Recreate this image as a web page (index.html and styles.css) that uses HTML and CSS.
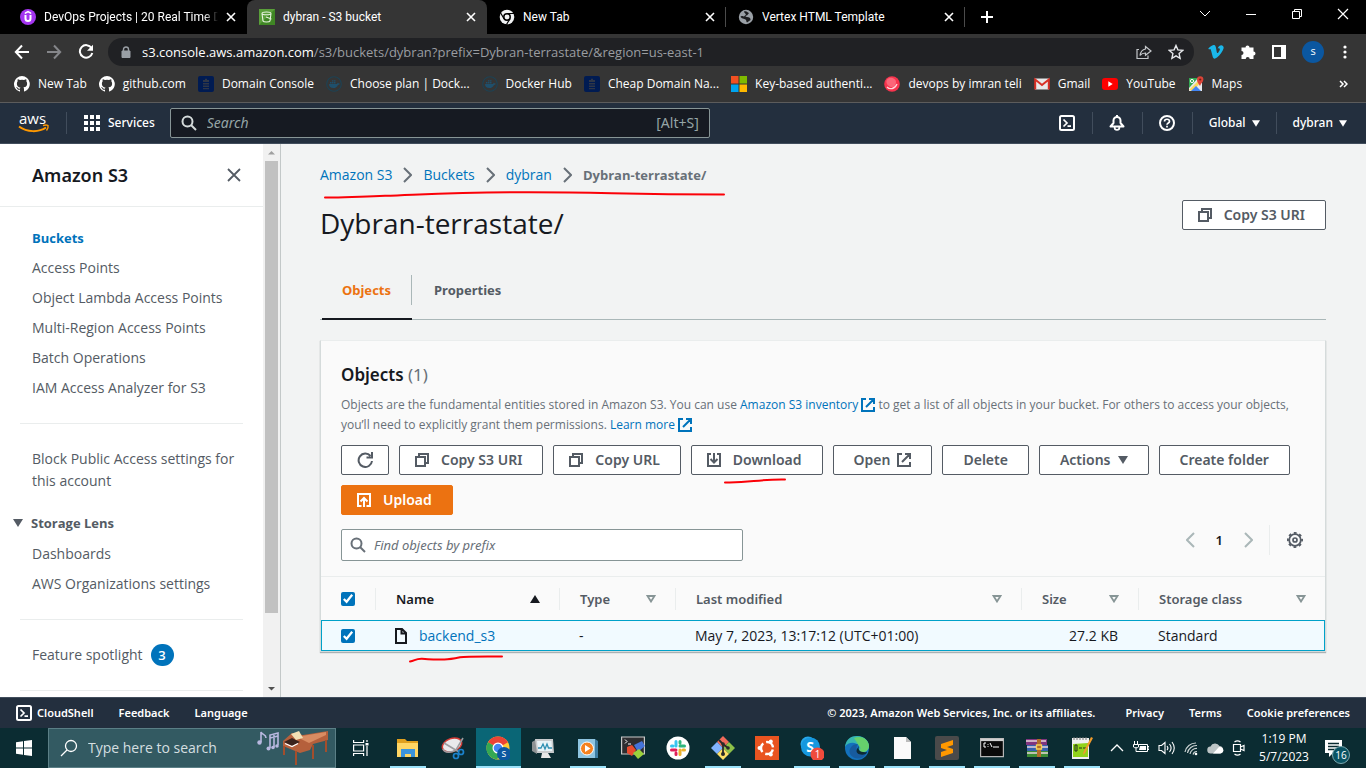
FILE: index.html
```html
<!DOCTYPE html>
<html lang="en">
<head>
<meta charset="utf-8">
<title>dybran - S3 bucket</title>
<link rel="stylesheet" href="styles.css">
</head>
<body>
<svg class="defs" aria-hidden="true">
  <symbol id="x" viewBox="0 0 10 10"><path d="M1 1l8 8M9 1l-8 8" fill="none" stroke="currentColor" stroke-width="1.6"/></symbol>
  <symbol id="github" viewBox="0 0 16 16"><path fill="#fff" d="M8 0a8 8 0 0 0-2.5 15.6c.4.1.5-.2.5-.4v-1.500c-2.200.5-2.700-1-2.700-1-.4-.9-.9-1.200-.9-1.200-.7-.5.1-.5.1-.5.8.1 1.200.8 1.200.8.7 1.300 1.900.9 2.300.7.1-.5.3-.9.500-1.100-1.800-.2-3.600-.9-3.600-4 0-.9.3-1.600.8-2.100 0-.2-.4-1 .1-2.100 0 0 .7-.2 2.200.8a7.500 7.500 0 0 1 4 0c1.500-1 2.200-.8 2.200-.8.4 1.100.2 1.900.1 2.100.5.6.8 1.300.8 2.100 0 3.100-1.900 3.700-3.700 4 .3.300.6.800.6 1.500v2.200c0 .2.100.5.600.4A8 8 0 0 0 8 0z"/></symbol>
  <symbol id="domain" viewBox="0 0 16 16"><rect width="16" height="16" rx="2" fill="#001b52"/><path d="M5 4h6v2H5zM5 7h6v1.500H5zM5 9.500h6V11H5zM5 12h6v1.200H5zM7 2.700h2V4H7z" fill="#2f3747"/></symbol>
  <symbol id="docker" viewBox="0 0 16 16"><circle cx="8" cy="8" r="7.300" fill="none" stroke="#1d4254" stroke-width="1.100"/><path d="M3 8h8c.3-1 .8-1.500 1-1.600.5.500.6 1 .6 1.200.6-.1 1 .1 1.200.2-.4.900-1 1.100-1.800 1.100C11.300 11 9.500 12 7.300 12 4.500 12 3 10.500 3 8zM4 6h1.500v1.500H4zM6 6h1.500v1.500H6zM8 6h1.500v1.500H8zM6 4.200h1.500v1.400H6zM8 4.200h1.500v1.400H8z" fill="#1f4f6b"/></symbol>
  <symbol id="shell" viewBox="0 0 16 16"><rect x="1" y="1" width="14" height="14" rx="1.500" fill="none" stroke="currentColor" stroke-width="2"/><path d="M4.500 4.500L8 8l-3.500 3.500M8.500 11.200H12" fill="none" stroke="currentColor" stroke-width="1.700"/></symbol>
  <symbol id="search" viewBox="0 0 16 16"><circle cx="6.500" cy="6.500" r="5" fill="none" stroke="currentColor" stroke-width="2"/><path d="M10 10l5 5" stroke="currentColor" stroke-width="2"/></symbol>
  <symbol id="down" viewBox="0 0 10 8"><path d="M0 0h10L5 8z" fill="currentColor"/></symbol>
  <symbol id="sort" viewBox="0 0 10 8"><path d="M1.500 1h7L5 6.500z" fill="none" stroke="#879596" stroke-width="1.800"/></symbol>
  <symbol id="chev" viewBox="0 0 9 16"><path d="M1 1l7 7-7 7" fill="none" stroke="currentColor" stroke-width="2"/></symbol>
  <symbol id="copy" viewBox="0 0 14 14"><path d="M1 4h9v9H1z" fill="none" stroke="currentColor" stroke-width="2"/><path d="M4 4V1h9v9h-3" fill="none" stroke="currentColor" stroke-width="2"/></symbol>
  <symbol id="ext" viewBox="0 0 14 14"><path d="M5 1H1v12h12V9M8 1h5v5M13 1L5 9" fill="none" stroke="currentColor" stroke-width="2"/></symbol>
  <symbol id="octo" viewBox="0 0 16 16"><circle cx="8" cy="8" r="5.800" fill="none" stroke="currentColor" stroke-width="1.800"/><circle cx="8" cy="8" r="7.100" fill="none" stroke="currentColor" stroke-width="1.800" stroke-dasharray="2.800 2.776" stroke-dashoffset="1.400"/><circle cx="8" cy="8" r="2" fill="none" stroke="currentColor" stroke-width="1.700"/></symbol>
</svg>

<header class="browser">
  <div class="tabs">
    <div class="tab">
      <svg width="16" height="16" viewBox="0 0 16 16"><circle cx="8" cy="8" r="8" fill="#a435f0"/><path d="M8 1.800l3.200 1.800v1.600L8 3.500 4.800 5.200V3.600z" fill="#fff"/><path d="M5.500 6v3.500c0 3.400 5 3.400 5 0V6" fill="none" stroke="#fff" stroke-width="2"/></svg>
      <span class="tab-title fade">DevOps Projects | 20 Real Time D</span>
      <button aria-label="Close tab"><svg width="10" height="10"><use href="#x"/></svg></button>
    </div>
    <div class="tab active">
      <svg width="16" height="16" viewBox="0 0 16 16"><path d="M0 0h16v16H0z" fill="#3f8624"/><path d="M0 0h16L0 16z" fill="#5a9f3a"/><path d="M3 4.500c0-2 9-2 9 0l-1 7.500c-.5 1.400-6.500 1.400-7 0zM3 4.500c0 1.700 9 1.700 9 0M7 8l5.500 2" fill="none" stroke="#e7f3df" stroke-width="1.100"/></svg>
      <span class="tab-title">dybran - S3 bucket</span>
      <button aria-label="Close tab"><svg width="10" height="10"><use href="#x"/></svg></button>
    </div>
    <div class="tab sep">
      <svg width="16" height="16" viewBox="0 0 16 16"><circle cx="8" cy="8" r="7.300" fill="#f1f3f4"/><circle cx="8" cy="8" r="3.200" fill="#f1f3f4" stroke="#000" stroke-width="1.500"/><path d="M8 4.500h7M5 9.700L1.500 3.700M11 9.700L7.500 15.500" stroke="#000" stroke-width="1.200"/></svg>
      <span class="tab-title">New Tab</span>
      <button aria-label="Close tab"><svg width="10" height="10"><use href="#x"/></svg></button>
    </div>
    <div class="tab sep">
      <svg width="16" height="16" viewBox="0 0 16 16"><circle cx="8" cy="8" r="7.200" fill="#9aa0a6"/><path d="M6 2.500c3-1 3 1 5 1.500l-2 2.500c-2-.5-2 1.500 0 1.500s4 1 3.500 3L9 13.500c-1-1-.5-2.500-1.500-3S3 9.500 2.500 7.500L6 6z" fill="#1c1d1f"/><path d="M3 6.500l3 1 2-2-2-2.500z" fill="#9aa0a6"/></svg>
      <span class="tab-title">Vertex HTML Template</span>
      <button aria-label="Close tab"><svg width="10" height="10"><use href="#x"/></svg></button>
    </div>
    <button class="newtab" aria-label="New tab"><svg width="12" height="12" viewBox="0 0 12 12"><path d="M6 0v12M0 6h12" stroke="#fff" stroke-width="2"/></svg></button>
    <div class="window-buttons">
      <button aria-label="Search tabs"><svg width="12" height="12" viewBox="0 0 12 12"><path d="M1 3l5 5 5-5" fill="none" stroke="#fff"/></svg></button>
      <button aria-label="Minimize"><svg width="12" height="12" viewBox="0 0 12 12"><path d="M1 6.500h10" stroke="#fff"/></svg></button>
      <button aria-label="Restore"><svg width="12" height="12" viewBox="0 0 12 12"><path d="M1.500 3.500h7v7h-7zM3.500 3V1.500h7v7H9" fill="none" stroke="#fff"/></svg></button>
      <button aria-label="Close window"><svg width="12" height="12" viewBox="0 0 12 12"><path d="M1 1l10 10M11 1L1 11" stroke="#fff" stroke-width="1.200"/></svg></button>
    </div>
  </div>

  <div class="toolbar">
    <button aria-label="Back"><svg width="16" height="16" viewBox="0 0 16 16"><path d="M15 8H2M8 1.500L1.800 8 8 14.500" fill="none" stroke="#fff" stroke-width="2"/></svg></button>
    <button aria-label="Forward"><svg width="16" height="16" viewBox="0 0 16 16"><path d="M1 8h13M8 1.500L14.200 8 8 14.500" fill="none" stroke="#85868a" stroke-width="2"/></svg></button>
    <button aria-label="Reload"><svg width="16" height="16" viewBox="0 0 16 16"><path d="M13.500 4A6.300 6.300 0 1 0 14.300 9" fill="none" stroke="#fff" stroke-width="2"/><path d="M15 .8v6H9z" fill="#fff"/></svg></button>
    <div class="address">
      <svg width="10" height="12" viewBox="0 0 10 12"><path d="M1 5h8v6.500H1z" fill="#9aa0a6" stroke="#9aa0a6" stroke-linejoin="round"/><path d="M2.500 5V3.300c0-3 5-3 5 0V5" fill="none" stroke="#9aa0a6" stroke-width="1.400"/></svg>
      <div class="url" role="textbox" aria-label="Address" contenteditable="true" spellcheck="false">s3.console.aws.amazon.com<span>/s3/buckets/dybran?prefix=Dybran-terrastate/&amp;region=us-east-1</span></div>
      <svg width="16" height="16" viewBox="0 0 16 16"><path d="M3 5.500H1v9h11v-3M9.500 2.500L15 7l-5.500 4.200V9C7 9 5.500 9.500 4 11.500 4.500 8 6.500 5.500 9.500 5z" fill="none" stroke="#c4c7ca" stroke-width="1.200"/></svg>
      <svg width="16" height="16" viewBox="0 0 16 16"><path d="M8 1.500l1.900 4.400 4.800.5-3.600 3.200 1 4.800L8 11.900l-4.100 2.500 1-4.800L1.300 6.400l4.800-.5z" fill="none" stroke="#e8eaed" stroke-width="1.400"/></svg>
    </div>
    <div class="extensions">
      <svg width="16" height="16" viewBox="0 0 16 16"><path d="M.3 4.500L1 5.500c1.200-.8 1.500-.8 2.200 1.500l1.300 5c.7 2.800 2 3.500 4.500 1.600 3-2.500 6-6.300 6.600-9.300C16.200.7 11.200-.3 9.700 4.500c1.800-.8 2.700.2 1.800 2-1.700 3.300-2.500 3.500-3 .2C7.900 2.800 7.600.8 5.500 1.100 3.800 1.400 2 3 .3 4.500z" fill="#1ab7ea"/></svg>
      <svg width="16" height="16" viewBox="0 0 16 16"><path d="M1.500 3.500h4a2 2 0 1 1 4 0h4v4a2 2 0 1 1 0 4V15H9.700a2 2 0 1 0-4 0H1.500v-4a2 2 0 1 0 0-4z" fill="#fff"/></svg>
      <svg width="14" height="14" viewBox="0 0 14 14"><path d="M1 1h12v12H1z" fill="none" stroke="#fff" stroke-width="2"/><path d="M9 1h4v12H9z" fill="#fff"/></svg>
      <span class="avatar">s</span>
      <svg width="4" height="14" viewBox="0 0 4 14"><circle cx="2" cy="2" r="1.600" fill="#fff"/><circle cx="2" cy="7" r="1.600" fill="#fff"/><circle cx="2" cy="12" r="1.600" fill="#fff"/></svg>
    </div>
  </div>

  <nav class="bookmarks" aria-label="Bookmarks">
    <a href="#"><svg width="16" height="16"><use href="#github"/></svg>New Tab</a>
    <a href="#"><svg width="16" height="16"><use href="#github"/></svg>github.com</a>
    <a href="#"><svg width="16" height="16"><use href="#domain"/></svg>Domain Console</a>
    <a href="#"><svg width="16" height="16"><use href="#docker"/></svg>Choose plan | Dock...</a>
    <a href="#"><svg width="16" height="16"><use href="#docker"/></svg>Docker Hub</a>
    <a href="#"><svg width="16" height="16"><use href="#domain"/></svg>Cheap Domain Na...</a>
    <a href="#"><svg width="16" height="16" viewBox="0 0 16 16"><path d="M0 0h7.500v7.500H0z" fill="#f25022"/><path d="M8.500 0H16v7.500H8.500z" fill="#7fba00"/><path d="M0 8.500h7.500V16H0z" fill="#00a4ef"/><path d="M8.500 8.500H16V16H8.500z" fill="#ffb900"/></svg>Key-based authenti...</a>
    <a href="#"><svg width="16" height="16" viewBox="0 0 16 16"><circle cx="8" cy="8" r="7.800" fill="#f7334d"/><path d="M3 3.500c3-3.500 9-1 9 2.500s-2 5.500-5 5-6-4.500-4-7.500z" fill="#fb6679"/><path d="M3 11c3 3 8 2 10-3" fill="none" stroke="#ffd5da" stroke-width="1.300"/></svg>devops by imran teli</a>
    <a href="#"><svg width="16" height="16" viewBox="0 0 16 16"><path d="M1 2.500h14v11H1z" fill="#e9e9e9"/><path d="M1.200 13.500v-10L8 9l6.800-5.500v10" fill="none" stroke="#d93025" stroke-width="2"/></svg>Gmail</a>
    <a href="#"><svg width="16" height="16" viewBox="0 0 16 16"><rect y="2" width="16" height="12" rx="3" fill="#f00"/><path d="M6.300 5.300L10.700 8l-4.400 2.700z" fill="#fff"/></svg>YouTube</a>
    <a href="#"><svg width="16" height="16" viewBox="0 0 16 16"><path d="M1 2h13v13H1z" fill="#e8eaed"/><path d="M1 2h9L1 12z" fill="#34a853"/><path d="M1 14L12 3l2 2-9 10z" fill="#fbd75b"/><path d="M3 15l5-5 5 5z" fill="#4285f4"/><path d="M12 10C10 7 9 6 9 3.500a3.200 3.200 0 0 1 6.400 0C15.400 6 13 7 12 10z" fill="#db4437"/><circle cx="12.200" cy="3.500" r="1.100" fill="#751a12"/><circle cx="4" cy="5" r="1.600" fill="none" stroke="#fff"/></svg>Maps</a>
    <button class="more" aria-label="More bookmarks"><svg width="9" height="8" viewBox="0 0 9 8"><path d="M1 1l3 3-3 3M5 1l3 3-3 3" fill="none" stroke="#fff" stroke-width="1.500"/></svg></button>
  </nav>
</header>

<div class="aws-nav">
  <a class="logo" href="#" aria-label="AWS home"><svg width="32" height="22" viewBox="0 0 32 22"><text x="1" y="12" class="logo-text">aws</text><path d="M1 14.500c8 6 20 6 27 1" fill="none" stroke="#f90" stroke-width="2"/><path d="M25 13.500c2-.5 4-.6 5 0 .4 1.500-.3 3.500-1.500 5" fill="none" stroke="#f90" stroke-width="1.400"/></svg></a>
  <button class="services"><svg width="16" height="16" viewBox="0 0 16 16" fill="#fff"><path d="M0 0h4v4H0zM6 0h4v4H6zM12 0h4v4h-4zM0 6h4v4H0zM6 6h4v4H6zM12 6h4v4h-4zM0 12h4v4H0zM6 12h4v4H6zM12 12h4v4h-4z"/></svg>Services</button>
  <label class="aws-search"><svg width="16" height="16"><use href="#search"/></svg><input type="text" placeholder="Search" aria-label="Search"><span>[Alt+S]</span></label>
  <div class="aws-right">
    <button class="icon-only" aria-label="CloudShell"><svg width="16" height="16"><use href="#shell"/></svg></button>
    <button class="icon-only" aria-label="Notifications"><svg width="16" height="16" viewBox="0 0 16 16"><path d="M8 0v2M1.500 11.500h13L11.500 8V5.500a3.500 3.500 0 0 0-7 0V8z" fill="none" stroke="#fff" stroke-width="2" stroke-linejoin="round"/><path d="M5.700 12v1c0 2.400 4.600 2.400 4.600 0v-1" fill="none" stroke="#fff" stroke-width="1.800"/></svg></button>
    <button class="icon-only" aria-label="Help"><svg width="16" height="16" viewBox="0 0 16 16"><circle cx="8" cy="8" r="7" fill="none" stroke="#fff" stroke-width="2"/><path d="M5.500 6.500c0-3 5-3 5 0C10.500 8 8 8 8 9.700M8 10.800v1.800" fill="none" stroke="#fff" stroke-width="1.700"/></svg></button>
    <button>Global<svg width="8" height="7"><use href="#down"/></svg></button>
    <button>dybran<svg width="8" height="7"><use href="#down"/></svg></button>
  </div>
</div>

<div class="page">
  <aside class="sidebar">
    <div class="side-head"><h2>Amazon S3</h2><button aria-label="Close navigation"><svg width="14" height="14" viewBox="0 0 14 14"><path d="M1 1l12 12M13 1L1 13" stroke="#545b64" stroke-width="1.800"/></svg></button></div>
    <nav class="side-nav">
      <ul>
        <li><a class="current" href="#">Buckets</a></li>
        <li><a href="#">Access Points</a></li>
        <li><a href="#">Object Lambda Access Points</a></li>
        <li><a href="#">Multi-Region Access Points</a></li>
        <li><a href="#">Batch Operations</a></li>
        <li><a href="#">IAM Access Analyzer for S3</a></li>
      </ul>
      <ul>
        <li><a href="#">Block Public Access settings for this account</a></li>
        <li class="group"><button><svg width="10" height="8"><use href="#down"/></svg>Storage Lens</button></li>
        <li><a href="#">Dashboards</a></li>
        <li><a href="#">AWS Organizations settings</a></li>
      </ul>
      <ul>
        <li class="spot"><a href="#">Feature spotlight</a><span class="count">3</span></li>
      </ul>
      <ul></ul>
    </nav>
  </aside>
  <div class="scrollbar"><svg width="17" height="17" viewBox="0 0 17 17"><path d="M5 10.500L8.500 7l3.500 3.500z" fill="#a0a0a0"/></svg><div class="track"><div class="thumb"></div></div><svg width="17" height="17" viewBox="0 0 17 17"><path d="M5 7l3.500 3.500L12 7z" fill="#505050"/></svg></div>

  <main class="content">
    <nav class="crumbs" aria-label="Breadcrumb">
      <a href="#">Amazon S3</a><svg width="9" height="16"><use href="#chev"/></svg>
      <a href="#">Buckets</a><svg width="9" height="16"><use href="#chev"/></svg>
      <a href="#">dybran</a><svg width="9" height="16"><use href="#chev"/></svg>
      <span>Dybran-terrastate/</span>
      <svg class="stroke stroke-crumbs" width="404" height="10" viewBox="0 0 404 10"><path d="M3 7.500c20 .5 30-.7 60-1.700C110 4 130 2.500 190 2.300c90-.5 100 2 212 2.200" /></svg>
    </nav>
    <div class="title-row"><h1>Dybran-terrastate/</h1><button class="btn"><svg width="14" height="14"><use href="#copy"/></svg>Copy S3 URI</button></div>
    <div class="page-tabs" role="tablist"><button class="selected" role="tab" aria-selected="true"><span>Objects</span></button><button role="tab"><span>Properties</span></button></div>

    <section class="card">
      <div class="card-head">
        <h2>Objects <span>(1)</span></h2>
        <p>Objects are the fundamental entities stored in Amazon S3. You can use <a href="#">Amazon S3 inventory <svg width="14" height="14"><use href="#ext"/></svg></a> to get a list of all objects in your bucket. For others to access your objects, you’ll need to explicitly grant them permissions. <a href="#">Learn more <svg width="14" height="14"><use href="#ext"/></svg></a></p>
        <div class="actions">
          <button class="btn refresh" aria-label="Refresh"><svg width="16" height="16" viewBox="0 0 16 16"><path d="M13.500 4A6.700 6.700 0 1 0 15 9M15 0v5.500H9.500" fill="none" stroke="currentColor" stroke-width="2"/></svg></button>
          <button class="btn"><svg width="14" height="14"><use href="#copy"/></svg>Copy S3 URI</button>
          <button class="btn"><svg width="14" height="14"><use href="#copy"/></svg>Copy URL</button>
          <button class="btn"><svg width="14" height="14" viewBox="0 0 14 14"><path d="M4 1H1v12h12V1h-3M7 0v9M3.500 6L7 9.500 10.500 6" fill="none" stroke="currentColor" stroke-width="2"/></svg>Download<svg class="stroke stroke-download" width="64" height="8" viewBox="0 0 64 8"><path d="M2 5.500c25 .8 32-3.500 60-3"/></svg></button>
          <button class="btn">Open<svg width="14" height="14"><use href="#ext"/></svg></button>
          <button class="btn">Delete</button>
          <button class="btn">Actions<svg class="caret" width="10" height="8"><use href="#down"/></svg></button>
          <button class="btn">Create folder</button>
          <button class="btn primary"><svg width="14" height="14" viewBox="0 0 14 14"><path d="M4.500 13H1V1h12v12H9.500M7 14V5M3.500 8.500L7 5l3.500 3.500" fill="none" stroke="currentColor" stroke-width="2"/></svg>Upload</button>
        </div>
        <div class="filter-row">
          <label class="filter"><svg width="16" height="16"><use href="#search"/></svg><input type="text" placeholder="Find objects by prefix" aria-label="Find objects by prefix"></label>
          <div class="pager">
            <button aria-label="Previous page"><svg class="flip" width="9" height="16"><use href="#chev"/></svg></button>
            <span>1</span>
            <button aria-label="Next page"><svg width="9" height="16"><use href="#chev"/></svg></button>
            <button class="gear" aria-label="Preferences"><svg width="16" height="16"><use href="#octo"/></svg></button>
          </div>
        </div>
      </div>
      <table>
        <colgroup><col class="c-check"><col class="c-name"><col class="c-type"><col><col class="c-size"><col class="c-class"></colgroup>
        <thead><tr>
          <th><input type="checkbox" checked aria-label="Select all"></th>
          <th><div class="dark">Name<svg class="up" width="10" height="8"><use href="#down"/></svg></div></th>
          <th><div>Type<svg width="10" height="8"><use href="#sort"/></svg></div></th>
          <th><div>Last modified<svg width="10" height="8"><use href="#sort"/></svg></div></th>
          <th><div>Size<svg width="10" height="8"><use href="#sort"/></svg></div></th>
          <th><div>Storage class<svg width="10" height="8"><use href="#sort"/></svg></div></th>
        </tr></thead>
        <tbody><tr>
          <td><input type="checkbox" checked aria-label="Select backend_s3"></td>
          <td><a class="file" href="#"><svg width="12" height="16" viewBox="0 0 12 16"><path d="M1 1h6l4 4v10H1zM6.500 1v4.500H11" fill="none" stroke="#16191f" stroke-width="2"/></svg>backend_s3<svg class="stroke stroke-file" width="96" height="10" viewBox="0 0 96 10"><path d="M2 7.500c5-.5 5-3 12-2.800 22 1.500 25 1.200 38-1.500 6-1 20-.7 42-.8"/></svg></a></td>
          <td>-</td>
          <td>May 7, 2023, 13:17:12 (UTC+01:00)</td>
          <td class="num">27.2 KB</td>
          <td>Standard</td>
        </tr></tbody>
      </table>
    </section>
  </main>
</div>

<footer class="aws-footer">
  <button><svg width="16" height="16"><use href="#shell"/></svg>CloudShell</button>
  <a href="#">Feedback</a>
  <a href="#">Language</a>
  <span class="copyright">© 2023, Amazon Web Services, Inc. or its affiliates.</span>
  <a href="#">Privacy</a>
  <a href="#">Terms</a>
  <a href="#">Cookie preferences</a>
</footer>

<div class="taskbar">
  <button class="start" aria-label="Start"><svg width="16" height="16" viewBox="0 0 16 16"><path d="M0 2.200l7-1v6.300H0zM8 1l8-1v7.500H8zM0 8.500h7v6.300l-7-1zM8 8.500h8V16l-8-1z" fill="#fff"/></svg></button>
  <label class="os-search"><svg width="18" height="18" viewBox="0 0 18 18"><circle cx="11" cy="7" r="5.500" fill="none" stroke="#fff" stroke-width="1.300"/><path d="M7 11l-6 6" stroke="#fff" stroke-width="1.300"/></svg><input type="text" placeholder="Type here to search" aria-label="Type here to search">
    <svg width="72" height="36" viewBox="0 0 72 36"><g fill="none" stroke="#b9b8e0" stroke-width="1.600"><path d="M4 12V2c1 3 5 2 5 6M13 18V5l8-2v12M13 8l8-2M17 17V5"/></g><g fill="#b9b8e0"><circle cx="2.500" cy="12.500" r="2.200"/><circle cx="11.500" cy="18.500" r="2"/><circle cx="16" cy="17.500" r="1.800"/><circle cx="20" cy="16" r="1.800"/></g><path d="M26 11l9-8 11 2 25-4v9L56 14l-3 6-10 3-17-7z" fill="#b5603c"/><path d="M45 6l24-4v3L52 13l-8-4z" fill="#d98c62"/><path d="M27 12l8 4 8-4-8-4z" fill="#3b241e"/><path d="M28 13.500l7 3 6-3" fill="none" stroke="#fff" stroke-width="1.200"/><path d="M34 4l8-3 4 7-7 2z" fill="#f1dfb4"/><path d="M27 16v9M39 21v14M56 15v14M69 10v12" stroke="#a34e2c" stroke-width="2"/></svg>
  </label>
  <button class="taskview" aria-label="Task view"><svg width="16" height="16" viewBox="0 0 16 16"><path d="M.6 0v2.500h10V0M.6 16v-2.500h10V16M.6 5h10v6H.6zM14 0v2M14 6v10" fill="none" stroke="#fff" stroke-width="1.200"/><path d="M12.500 3h3v2.500h-3z" fill="#fff"/></svg></button>
  <div class="apps">
    <button class="open" aria-label="File Explorer"><svg viewBox="0 0 24 24"><path d="M1 3h8l2 2h11v16H1z" fill="#e0a01e"/><path d="M1 7h21v14H1z" fill="#ffd664"/><path d="M5 21v-8h14v8h-4v-3H9v3z" fill="#3b94dc"/></svg></button>
    <button aria-label="Snipping Tool"><svg viewBox="0 0 24 24"><ellipse cx="11" cy="9" rx="10" ry="6.500" transform="rotate(-20 11 9)" fill="#e9e9ec" stroke="#d23b35" stroke-width="1.500"/><path d="M2 13c2 5 10 3 13 1l7-12M3 7l15 9" fill="none" stroke="#9b9ca1" stroke-width="1.600"/><circle cx="20" cy="16" r="2.500" fill="none" stroke="#1b82cd" stroke-width="1.700"/><circle cx="15" cy="20" r="2.500" fill="none" stroke="#1b82cd" stroke-width="1.700"/></svg></button>
    <button class="open focus" aria-label="Google Chrome"><svg viewBox="0 0 24 24"><circle cx="12" cy="12" r="11.500" fill="#fcc934"/><path d="M12 12L2 6.200A11.500 11.500 0 0 1 22 6.200z" fill="#ea4335"/><path d="M12 12L2 6.200A11.500 11.500 0 0 0 11 23.500l5-9z" fill="#34a853"/><circle cx="12" cy="12" r="5.500" fill="#fff"/><circle cx="12" cy="12" r="4.300" fill="#4285f4"/><circle cx="18" cy="18" r="7" fill="#0b57a0"/><text x="18" y="21" class="badge-text">s</text></svg></button>
    <button aria-label="Task Manager"><svg viewBox="0 0 24 24"><path d="M1 6l5-3v15l-5-3z" fill="#8e9294"/><path d="M4 3h18l1 14H6z" fill="#c9cbcd"/><path d="M6 5h14.500l.7 10H7z" fill="#e9f3f7"/><path d="M7 12h3l2-4 2 5 2-5 1.500 4H21" fill="none" stroke="#2f8fb2" stroke-width="1.300"/><path d="M11 17h6l3 5H10z" fill="#e6e6e6"/></svg></button>
    <button class="open" aria-label="Media Player"><svg viewBox="0 0 24 24"><path d="M2 3h17v19H2z" fill="#8ec4e0"/><path d="M19 3l3 2v17h-3z" fill="#3d7da2"/><circle cx="11" cy="12.500" r="6.500" fill="#f58220" stroke="#fff"/><path d="M9 9l5.500 3.500L9 16z" fill="#fff"/></svg></button>
    <button aria-label="MobaXterm"><svg viewBox="0 0 24 24"><path d="M.6 1h22.800v17H.6z" fill="#2d2d30" stroke="#c9c9c9" stroke-width="1.200"/><path d="M4 3.500l2 2-2 2M7 8h3" stroke="#fff" fill="none"/><path d="M6 11l5-2 4 5-4 6-5-3z" fill="#e94b2e"/><path d="M13 9l8-4 3 5-7 6z" fill="#4573d9"/><path d="M12 17l6-4 5 5-6 5z" fill="#9cd13c"/></svg></button>
    <button aria-label="Slack"><svg viewBox="0 0 24 24"><circle cx="12" cy="12" r="11.500" fill="#fff"/><g stroke-width="3" stroke-linecap="round"><path d="M10 5.500v4.500M5.500 10H7" stroke="#36c5f0"/><path d="M14 10h4.500M14 5.500V7" stroke="#2eb67d"/><path d="M14 14v4.500M17 14h1.500" stroke="#ecb22e"/><path d="M5.500 14H10M10 17v1.500" stroke="#e01e5a"/></g></svg></button>
    <button class="open" aria-label="Git Bash"><svg viewBox="0 0 24 24"><path d="M12 0l6 6-6 6-6-6z" fill="#f06a5a"/><path d="M6 6l6 6-6 6-6-6z" fill="#80b3ff"/><path d="M18 6l6 6-6 6-6-6z" fill="#8dc149"/><path d="M12 12l6 6-6 6-6-6z" fill="#ffe066"/><path d="M8 4l4 4v10M12 8l5 4" fill="none" stroke="#2b2b2b" stroke-width="1.800"/><circle cx="12" cy="18" r="2" fill="#2b2b2b"/><circle cx="12" cy="8" r="1.800" fill="#2b2b2b"/><circle cx="17" cy="12" r="1.800" fill="#2b2b2b"/></svg></button>
    <button aria-label="Ubuntu"><svg viewBox="0 0 24 24"><path d="M0 0h24v24H0z" fill="#e95420"/><circle cx="12" cy="12" r="6" fill="none" stroke="#fff" stroke-width="2.400" stroke-dasharray="9.500 3.060" stroke-dashoffset="-1.500"/><g fill="#fff"><circle cx="4.500" cy="12" r="2"/><circle cx="15.800" cy="5.500" r="2"/><circle cx="15.800" cy="18.500" r="2"/></g></svg></button>
    <button class="open" aria-label="Skype"><svg viewBox="0 0 24 24"><circle cx="8" cy="8" r="7.500" fill="#28a8ea"/><circle cx="10.500" cy="11" r="9.500" fill="#1698df"/><text x="10" y="16" class="skype-text">S</text><circle cx="17.500" cy="18.500" r="7" fill="#f04b3c"/><text x="17.500" y="22" class="badge-text">1</text></svg></button>
    <button class="open" aria-label="Microsoft Edge"><svg viewBox="0 0 24 24"><circle cx="12" cy="12" r="12" fill="#1372bd"/><path d="M0 11C1 3 6 0 12 0c8 0 12 6 12 10s-4 7-8 6-1-4-2-6C12 6 3 5 0 11z" fill="#38b7b0"/><path d="M9 2C19-2 24 6 24 10s-4 7-8 6c-2-.6-1-2-.500-4z" fill="#66d16c"/><path d="M13 8c-3 4-2 9 8 10-4 6-12 6-16 0-2-5 2-10 8-10z" fill="#175b9e"/><path d="M14 10c-2 4 2 7 8 6 0 4-13 4-10-3z" fill="#0d2a34"/></svg></button>
    <button class="open" aria-label="Notepad"><svg viewBox="0 0 24 24"><path d="M4 1h12l5 5v17H4z" fill="#fafafa"/><path d="M16 1v5h5z" fill="#bdbdbd"/></svg></button>
    <button class="open" aria-label="Sublime Text"><svg viewBox="0 0 24 24"><rect width="24" height="24" rx="2" fill="#4a4a4a"/><path d="M6 8l12-4v5l-6 2 6 2v4L6 21v-5l6-2-6-2z" fill="#ff9800"/></svg></button>
    <button class="open" aria-label="Command Prompt"><svg viewBox="0 0 24 24"><path d="M.6 2.600h22.800v18H.6z" fill="#090909" stroke="#b5b5b5" stroke-width="1.200"/><path d="M.6 2.600h22.800v2.500H.6z" fill="#cfcfcf"/><path d="M6 7H4v4h2M8 8v.8M8 10v.8M10 7l2 4M13 11h6" fill="none" stroke="#fff"/></svg></button>
    <button class="open" aria-label="WinRAR"><svg viewBox="0 0 24 24"><path d="M1 3h21v6H1z" fill="#80357f"/><path d="M2 9h21v6H2z" fill="#3561af"/><path d="M2 15h21v6H2z" fill="#3c8c35"/><path d="M1 5h20M2 11h21M2 17h21" stroke="#e8d5da" stroke-width="1.300"/><path d="M12 3h4v18h-4z" fill="#b16b2a"/><path d="M11.500 9h5v4h-5z" fill="none" stroke="#f5cf57" stroke-width="1.300"/></svg></button>
    <button class="open" aria-label="Notepad++"><svg viewBox="0 0 24 24"><path d="M2 2h17v21H2z" fill="#efefef"/><path d="M3 8l15-1v14H3z" fill="#91d21a"/><path d="M4 1v3M7 1v3M10 1v3M13 1v3M16 1v3" stroke="#777"/><path d="M5 9v6h2V9zM9 12h3M13 12h3" fill="none" stroke="#22321a"/><path d="M23 2l-8 15-2 2 .500-3L21 1z" fill="#f19b2b"/></svg></button>
  </div>
  <div class="tray">
    <svg width="14" height="16" viewBox="0 0 14 16"><path d="M1 11l6-6 6 6" fill="none" stroke="#fff" stroke-width="1.300"/></svg>
    <svg width="16" height="16" viewBox="0 0 16 16"><path d="M5.500 4.500h9v7h-9M14.500 6.500H16v3h-1.500M1.500 1v3M4.500 1v3M.5 4.500h5V7c0 1-5 1-5 0zM3 8v3.500h3" fill="none" stroke="#fff"/><path d="M7 6h6v4H6z" fill="#fff"/></svg>
    <svg width="17" height="16" viewBox="0 0 17 16"><path d="M1 5.500h2.500L7 2.500v11L3.500 10.500H1zM9 6c1 1.200 1 3 0 4M11.500 4c2 2.500 2 5.500 0 8M14 2c3 4 3 8 0 12" fill="none" stroke="#fff" stroke-width="1.100"/></svg>
    <svg width="14" height="16" viewBox="0 0 14 16"><path d="M1 12A11 11 0 0 1 12 3M3.500 13A9 9 0 0 1 13 5.500M6 14a6.500 6.500 0 0 1 7-5.500M9 14.500a4 4 0 0 1 4-3" fill="none" stroke="#cbd3d3" stroke-width="1.200"/><circle cx="12" cy="14" r="1.300" fill="#fff"/></svg>
    <svg width="17" height="16" viewBox="0 0 17 16"><path d="M4 13.500a3.500 3.500 0 0 1-.5-7A5 5 0 0 1 12.500 6a3.800 3.800 0 0 1 .5 7.500z" fill="#bcc4c5"/><path d="M6 13.500L12 7c5-1 6 6 1.500 6.500z" fill="#fff"/></svg>
    <svg width="13" height="16" viewBox="0 0 13 16"><path d="M1.500 4.500h7v7h-7zM8.500 7l3.500-1.500v5L8.500 9M2.500 2c2-1.500 4-1.500 6 0M2.500 14c2 1.500 4 1.500 6 0" fill="none" stroke="#fff" stroke-width="1.200"/></svg>
  </div>
  <div class="clock"><span>1:19 PM</span><span>5/7/2023</span></div>
  <button class="notify" aria-label="Notifications"><svg width="17" height="17" viewBox="0 0 17 17"><path d="M0 0h17v13H8l-4 4v-4H0z" fill="#fff"/><path d="M3 3.500h11M3 6.500h11M3 9.500h8" stroke="#0b2c32" stroke-width="1.300"/></svg><span>16</span></button>
</div>
</body>
</html>
```
FILE: styles.css
```css
* { box-sizing: border-box; }
body {
  margin: 0;
  height: 100vh;
  display: flex;
  flex-direction: column;
  overflow: hidden;
  font: 13px/20px "Noto Sans", sans-serif;
  color: #16191f;
}
button { background: none; border: 0; padding: 0; margin: 0; font: inherit; color: inherit; display: flex; align-items: center; white-space: nowrap; }
input { font: inherit; color: inherit; }
a { color: #0073bb; text-decoration: none; }
h1, h2, p, ul { margin: 0; padding: 0; }
ul { list-style: none; }
svg { flex: none; display: block; }
.defs { position: absolute; width: 0; height: 0; }

/* Browser chrome */
.browser { flex: none; background: #353535; color: #fff; font: 12px/16px "Open Sans", sans-serif; border-bottom: 1px solid #5c5c5c; }
.tabs { display: flex; height: 34px; background: #000; font-family: Roboto, sans-serif; }
.tab { display: flex; align-items: center; gap: 8px; width: 239px; padding: 0 11px 0 12px; }
.tab:first-child { width: 247px; padding-left: 20px; background: #000; }
.tab.active { width: 240px; background: #353535; border-radius: 8px 8px 0 0; }
.tab.sep { background: linear-gradient(#4b4b4b, #4b4b4b) right center / 1px 20px no-repeat; }
.tab-title { flex: 1; overflow: hidden; white-space: nowrap; }
.fade { -webkit-mask-image: linear-gradient(90deg, #000 92%, transparent); mask-image: linear-gradient(90deg, #000 92%, transparent); }
.newtab { padding: 0 16px; }
.window-buttons { margin-left: auto; display: flex; height: 28px; }
.window-buttons button { width: 46px; justify-content: center; }
.toolbar { display: flex; align-items: center; height: 36px; padding-left: 14px; gap: 16px; }
.address { flex: 1; display: flex; align-items: center; gap: 16px; height: 28px; margin-left: -2px; padding: 0 10px 0 13px; border-radius: 14px; background: #202124; }
.url { flex: 1; margin-left: -5px; font-size: 13px; line-height: 20px; white-space: nowrap; overflow: hidden; }
.url span { color: #9a9da1; }
.extensions { display: flex; align-items: center; gap: 16px; padding-right: 19px; margin-left: -2px; }
.avatar { width: 22px; height: 22px; margin-right: 3px; border-radius: 50%; background: #0b57a0; font-size: 11px; line-height: 20px; text-align: center; }
.bookmarks { display: flex; align-items: center; gap: 12px; height: 32px; padding: 0 18px 4px 14px; }
.bookmarks a { display: flex; align-items: center; gap: 8px; color: #fff; white-space: nowrap; }
.more { margin-left: auto; }

/* AWS top bar */
.aws-nav { flex: none; display: flex; align-items: center; height: 41px; background: #232f3e; color: #fff; font-size: 12px; font-weight: 500; padding-left: 18px; border-bottom: 1px solid #414d5c; }
.logo { padding-right: 16px; }
.logo svg { overflow: visible; }
.logo-text { font: 500 15px "Open Sans", sans-serif; fill: #fff; }
.services { gap: 8px; height: 22px; border-left: 1px solid #414d5c; padding: 0 15px 0 17px; }
.aws-search { display: flex; align-items: center; gap: 10px; flex: 0 1 540px; height: 30px; padding: 0 10px; border: 1px solid #879596; border-radius: 2px; background: #161a22; color: #d5dbdb; font-size: 14px; font-weight: 400; }
.aws-search input { flex: 1; min-width: 0; border: 0; padding: 0; background: none; }
.aws-search input::placeholder { color: #95a5a6; font-style: italic; opacity: 1; }
.aws-search span { color: #95a5a6; }
.aws-right { margin-left: auto; display: flex; padding-right: 3px; }
.aws-right button { gap: 6px; height: 22px; padding: 0 16px; border-left: 1px solid #414d5c; }
.aws-right .icon-only { padding: 0 17px 0 16px; }
.aws-right button:first-child { border-left: 0; }

/* Page */
.page { flex: 1; min-height: 0; display: flex; background: #f2f3f3; }
.sidebar { flex: none; width: 263px; overflow: hidden; background: #fff; }
.side-head { display: flex; align-items: center; justify-content: space-between; height: 63px; padding: 0 22px 0 32px; border-bottom: 1px solid #eaeded; }
.side-head h2 { font-size: 18px; line-height: 22px; font-weight: 600; }
.side-nav { padding: 0 20px; font-family: "Open Sans", sans-serif; font-size: 14px; }
.side-nav ul { display: flex; flex-direction: column; gap: 8px; padding: 20px 8px 24px 12px; border-bottom: 1px solid #eaeded; }
.side-nav ul + ul { padding-top: 24px; }
.side-nav li { line-height: 22px; }
.side-nav a { color: #545b64; }
.side-nav a.current { color: #0073bb; font-size: 13px; font-weight: 700; }
.group button { gap: 8px; margin: 12px 0 1px -19px; color: #545b64; font-size: 13px; font-weight: 700; line-height: 22px; }
.spot { display: flex; align-items: center; gap: 8px; }
.count { width: 23px; border-radius: 11px; background: #0073bb; color: #fff; font-size: 13px; font-weight: 600; text-align: center; }
.scrollbar { flex: none; width: 18px; background: #f1f1f1; border-right: 1px solid #c3c8c8; display: flex; flex-direction: column; }
.track { flex: 1; padding: 0 2px; }
.thumb { height: 87%; background: #c1c1c1; }
.content { flex: 1; min-width: 0; padding: 20px 40px 0 39px; }
.stroke { position: absolute; overflow: visible; pointer-events: none; fill: none; stroke: #fb0007; stroke-width: 2; stroke-linecap: round; }
.crumbs { position: relative; display: flex; align-items: center; gap: 11px; height: 22px; color: #687078; font-family: "Open Sans", sans-serif; font-size: 14px; }
.crumbs span { font-size: 13px; font-weight: 700; }
.stroke-crumbs { left: 2px; top: 26px; }
.title-row { display: flex; align-items: flex-start; justify-content: space-between; padding-top: 14px; height: 69px; }
h1 { font-family: "Open Sans", sans-serif; font-size: 28px; line-height: 46px; font-weight: 400; }
.page-tabs { display: flex; align-items: center; height: 65px; border-bottom: 1px solid #aab7b8; font-size: 13px; font-weight: 700; color: #545b64; }
.page-tabs button { height: 65px; padding: 6px 0 0 22px; }
.page-tabs span { line-height: 30px; }
.page-tabs .selected { color: #ec7211; background: linear-gradient(#16191f, #16191f) right bottom / calc(100% - 2px) 2px no-repeat; }
.page-tabs .selected span { padding-right: 20px; border-right: 1px solid #aab7b8; }
.btn { position: relative; height: 30px; padding: 0 20px; border: 1px solid #545b64; border-radius: 2px; background: #fff; color: #545b64; font-size: 14px; font-weight: 600; gap: 12px; }
.btn svg:first-child { margin-left: -5px; }
.btn svg:last-child:not(:first-child) { margin-right: -5px; }
.btn .caret:last-child:not(:first-child) { margin-right: 0; }
.refresh { padding: 0 15px; }
.refresh svg:first-child { margin: 0; }
.primary { background: #ec7211; border-color: #ec7211; color: #fff; }
.stroke-download { left: 31px; top: 31px; }
.card { margin-top: 20px; background: #fafafa; border: 1px solid #d5dbdb; border-top-color: #eaeded; box-shadow: 0 1px 1px rgba(0, 28, 36, .3); }
.card-head { padding: 20px 20px 15px; }
.card h2 { font-size: 17px; line-height: 28px; font-weight: 600; }
.card h2 span { color: #687078; font-weight: 400; }
.card p { margin-top: 6px; font-family: "Open Sans", sans-serif; font-size: 12px; line-height: 20px; color: #687078; }
.card p svg { display: inline-block; vertical-align: -3px; }
.actions { display: flex; flex-wrap: wrap; gap: 10px; margin-top: 10px; }
.filter-row { display: flex; justify-content: space-between; align-items: flex-start; margin-top: 14px; }
.filter { display: flex; align-items: center; gap: 8px; flex: 0 1 402px; height: 32px; padding: 0 8px; border: 1px solid #879596; border-radius: 2px; background: #fff; color: #687078; }
.filter input { flex: 1; min-width: 0; border: 0; padding: 0; background: none; }
.filter input::placeholder { color: #687078; font-style: italic; opacity: 1; }
.pager { display: flex; align-items: center; gap: 21px; height: 30px; margin-top: -4px; color: #aab7b8; }
.pager span { color: #16191f; font-weight: 600; }
.flip { transform: scaleX(-1); }
.gear { height: 30px; margin-left: -5px; padding: 0 2px 0 17px; border-left: 1px solid #eaeded; color: #545b64; }
table { width: 100%; table-layout: fixed; border-collapse: separate; border-spacing: 0; border-top: 1px solid #eaeded; }
.c-check { width: 54px; } .c-name { width: 184px; } .c-type { width: 116px; } .c-size { width: 117px; } .c-class { width: 187px; }
th { height: 43px; padding: 0; text-align: left; font-weight: 600; color: #545b64; }
th:first-child, td:first-child { padding-left: 20px; }
th div { display: flex; align-items: center; justify-content: space-between; line-height: 22px; padding: 0 19px 0 20px; border-left: 1px solid #eaeded; }
th .dark { color: #16191f; }
.up { transform: scaleY(-1); }
td { height: 31px; padding: 0 20px; background: #f1faff; border-top: 1px solid #00a1c9; border-bottom: 1px solid #00a1c9; font-family: "Open Sans", sans-serif; font-size: 14px; white-space: nowrap; }
td:first-child { border-left: 1px solid #00a1c9; padding: 0 0 0 19px; }
td:last-child { border-right: 1px solid #00a1c9; }
.num { text-align: right; }
input[type="checkbox"] { display: block; width: 14px; height: 14px; margin: 0; accent-color: #0073bb; }
.file { position: relative; display: flex; align-items: center; gap: 12px; }
.stroke-file { left: 13px; top: 28px; }

/* AWS footer */
.aws-footer { flex: none; display: flex; align-items: center; gap: 25px; height: 31px; padding: 0 16px; background: #232f3e; border-top: 1px solid #414d5c; color: #fff; font-size: 11px; font-weight: 600; white-space: nowrap; }
.aws-footer a { color: #fff; }
.aws-footer button { gap: 5px; }
.copyright { margin-left: auto; margin-right: 5px; }

/* Taskbar */
.taskbar { flex: none; display: flex; align-items: stretch; height: 40px; background: #0b2c32; color: #fff; font: 12px/18px "Open Sans", sans-serif; }
.start { width: 48px; justify-content: center; }
.os-search { display: flex; align-items: center; gap: 10px; width: 288px; padding-left: 11px; background: #335a62; border: 1px solid #5b7f86; }
.os-search input { flex: 1; min-width: 0; border: 0; padding: 0; background: none; font-size: 14px; }
.os-search input::placeholder { color: #d5dfe0; opacity: 1; }
.os-search svg:last-child { margin-right: 6px; }
.taskview { width: 50px; justify-content: center; }
.apps { display: flex; flex: 0 1 718px; }
.apps button { flex: 1; justify-content: center; background: linear-gradient(#9be2fa, #9be2fa) center bottom / 36px 2px no-repeat; }
.apps button:not(.open) { background: none; }
.apps .focus { background: linear-gradient(#9be2fa, #9be2fa) center bottom / 100% 2px no-repeat #0a6676; }
.apps svg { width: 24px; height: 24px; }
.badge-text { font: 10px "Open Sans", sans-serif; fill: #fff; text-anchor: middle; }
.skype-text { font: 700 14px "Open Sans", sans-serif; fill: #fff; text-anchor: middle; }
.tray { display: flex; align-items: center; gap: 9px; margin-left: 6px; }
.tray svg:last-child { margin-left: -1px; }
.clock { display: flex; flex-direction: column; justify-content: center; align-items: center; width: 78px; padding-bottom: 1px; }
.notify { position: relative; margin-left: auto; padding-right: 24px; }
.notify span { position: absolute; left: 7px; top: 18px; width: 18px; height: 18px; border: 1px solid #7da9b0; border-radius: 50%; background: #0a5363; font-size: 10px; line-height: 16px; text-align: center; }
```
